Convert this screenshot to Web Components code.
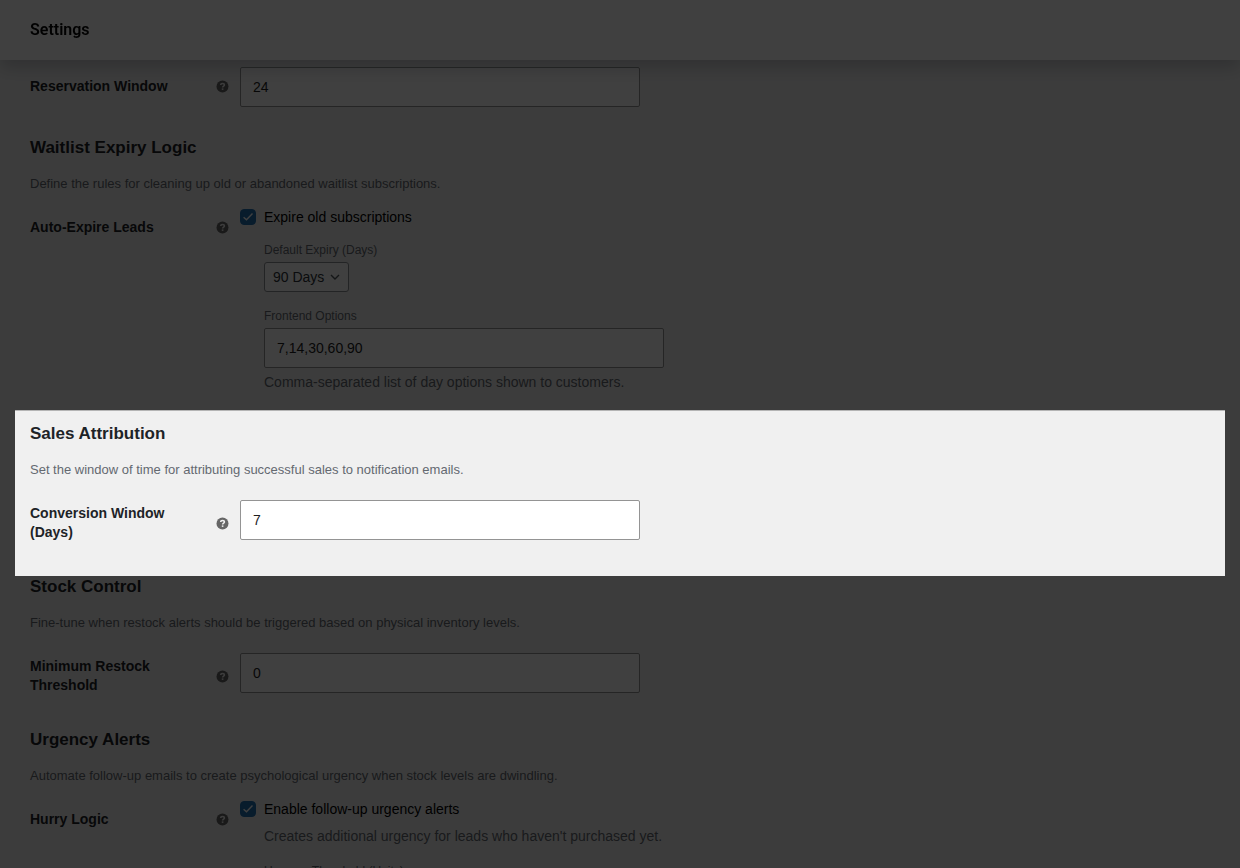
<!DOCTYPE html>
<html lang="en">
<head>
<meta charset="utf-8">
<title>Settings</title>
<style>
  html, body { height: 100%; }
  body {
    margin: 0;
    overflow: hidden;
    background: #f0f0f0;
    color: #1d2327;
    font: 14px/20px "Liberation Sans", Arial, sans-serif;
  }
</style>
</head>
<body>

<page-header>Settings</page-header>

<settings-page>
  <settings-row label="Reservation Window" value="24"></settings-row>

  <settings-section heading="Waitlist Expiry Logic">
    <span slot="description">Define the rules for cleaning up old or abandoned waitlist subscriptions.</span>
    <settings-row label="Auto-Expire Leads">
      <check-field checked>Expire old subscriptions</check-field>
      <sub-field type="select" label="Default Expiry (Days)" options="90 Days|60 Days|30 Days"></sub-field>
      <sub-field label="Frontend Options" value="7,14,30,60,90">Comma-separated list of day options shown to customers.</sub-field>
    </settings-row>
  </settings-section>

  <settings-section heading="Sales Attribution" spotlight>
    <span slot="description">Set the window of time for attributing successful sales to notification emails.</span>
    <settings-row label="Conversion Window (Days)" value="7" two-line></settings-row>
  </settings-section>

  <settings-section heading="Stock Control">
    <span slot="description">Fine-tune when restock alerts should be triggered based on physical inventory levels.</span>
    <settings-row label="Minimum Restock Threshold" value="0" two-line></settings-row>
  </settings-section>

  <settings-section heading="Urgency Alerts">
    <span slot="description">Automate follow-up emails to create psychological urgency when stock levels are dwindling.</span>
    <settings-row label="Hurry Logic">
      <check-field checked hint="Creates additional urgency for leads who haven't purchased yet.">Enable follow-up urgency alerts</check-field>
      <sub-field label="Urgency Threshold (Units)" value="5"></sub-field>
    </settings-row>
  </settings-section>
</settings-page>

<script>
// shared by every element that renders a text box
const inputStyles = `
  input {
    box-sizing: border-box;
    display: block;
    width: 100%;
    max-width: 400px;
    height: 40px;
    margin: 0;
    padding: 0 12px;
    border: 1px solid #949494;
    border-radius: 2px;
    background: #fff;
    color: #1e1e1e;
    font: inherit;
  }
`

class PageHeader extends HTMLElement {
  constructor() {
    super()
    this.attachShadow({ mode: 'open' })
    this.shadowRoot.innerHTML = `
      <style>
        :host {
          box-sizing: border-box;
          position: fixed;
          top: 0;
          left: 0;
          right: 0;
          z-index: 1;
          display: flex;
          align-items: center;
          height: 60px;
          padding: 0 30px;
          background: #fff;
          box-shadow: 0 8px 16px 0 rgba(85, 93, 102, 0.3);
        }
        h1 {
          margin: 0;
          font: 600 16px/20px Roboto, sans-serif;
          color: #070707;
        }
      </style>
      <h1><slot></slot></h1>
    `
  }
}

class SettingsPage extends HTMLElement {
  constructor() {
    super()
    this.attachShadow({ mode: 'open' })
    this.shadowRoot.innerHTML = `
      <style>
        :host { display: block; padding: 57px 30px 0; }
        main { display: flex; flex-direction: column; gap: 12px; }
      </style>
      <main><slot></slot></main>
    `
  }
}

/**
 * <settings-section>: heading, description and its rows.
 * With the spotlight attribute, everything outside the section is dimmed.
 */
class SettingsSection extends HTMLElement {
  constructor() {
    super()
    this.attachShadow({ mode: 'open' })
  }

  connectedCallback() {
    this.shadowRoot.innerHTML = `
      <style>
        :host { display: block; }
        :host([spotlight]) { position: relative; }
        :host([spotlight])::after {
          content: "";
          position: absolute;
          z-index: 10;
          inset: -11px -15px -14px;
          box-sizing: border-box;
          border-top: 1px solid rgba(0, 0, 0, 0.25);
          box-shadow: 0 0 0 9999px rgba(0, 0, 0, 0.75);
          pointer-events: none;
        }
        h2 { margin: 0 0 13px; font-size: 17px; line-height: 26px; }
        p { margin: 0 0 4px; font-size: 13px; line-height: 20px; color: #646970; }
      </style>
      <h2>${this.getAttribute('heading')}</h2>
      <p><slot name="description"></slot></p>
      <slot></slot>
    `
  }
}

class HelpTip extends HTMLElement {
  constructor() {
    super()
    this.attachShadow({ mode: 'open' })
    this.shadowRoot.innerHTML = `
      <style>
        :host { display: block; }
        button { display: block; padding: 0; border: 0; background: none; color: #666; }
        svg { display: block; }
      </style>
      <button type="button" aria-label="Help">
        <svg width="13" height="13" viewBox="0 0 13 13" fill="none">
          <circle cx="6.5" cy="6.5" r="6" fill="currentColor"/>
          <path d="M4.7 5.1C4.7 3.9 5.5 3.4 6.5 3.4S8.4 4 8.4 5C8.4 6.2 6.7 6.2 6.6 7.5" stroke="#f0f0f0" stroke-width="1.5"/>
          <path d="M5.8 8.4h1.6v1.5H5.8z" fill="#f0f0f0"/>
        </svg>
      </button>
    `
  }
}

/**
 * <settings-row>: label column, help tip and field.
 * With a value it renders its own text box, otherwise the slotted fields.
 */
class SettingsRow extends HTMLElement {
  constructor() {
    super()
    this.attachShadow({ mode: 'open' })
  }

  connectedCallback() {
    const label = this.getAttribute('label')
    const hasInput = this.hasAttribute('value')

    this.shadowRoot.innerHTML = `
      <style>
        :host {
          display: grid;
          grid-template-columns: 210px minmax(0, 1fr);
          align-items: start;
        }
        .head {
          display: flex;
          align-items: center;
          justify-content: space-between;
          padding: 20px 11px 20px 0;
        }
        .title { max-width: 150px; font-weight: 700; line-height: 19px; }
        .field { padding: 10px 0 16px; }
        :host([two-line]) .field { padding: 16px 0 10px; }
        ${inputStyles}
      </style>
      <div class="head">
        ${hasInput
          ? `<label class="title" for="field">${label}</label>`
          : `<span class="title">${label}</span>`}
        <help-tip></help-tip>
      </div>
      <div class="field">
        ${hasInput ? `<input id="field" type="text" value="${this.getAttribute('value')}">` : '<slot></slot>'}
      </div>
    `
  }
}

class CheckField extends HTMLElement {
  constructor() {
    super()
    this.attachShadow({ mode: 'open' })
  }

  connectedCallback() {
    const hint = this.getAttribute('hint')

    this.shadowRoot.innerHTML = `
      <style>
        :host { display: block; }
        label { display: flex; align-items: center; gap: 8px; line-height: 18px; color: #000; }
        .box { display: grid; }
        .box > * { grid-area: 1 / 1; }
        input {
          appearance: none;
          width: 16px;
          height: 16px;
          margin: 0;
          border: 1px solid #8c8f94;
          border-radius: 4px;
          background: #fff;
        }
        input:checked { border-color: #2271b1; background: #2271b1; }
        svg { pointer-events: none; }
        input:not(:checked) + svg { visibility: hidden; }
        p { margin: 8px 0 0 24px; line-height: 21px; color: #646970; }
      </style>
      <label>
        <span class="box">
          <input type="checkbox" ${this.hasAttribute('checked') ? 'checked' : ''}>
          <svg width="16" height="16" viewBox="0 0 16 16" fill="none">
            <path d="M3.6 8.2l2.9 2.6 6-6.2" stroke="#fff" stroke-width="1.4"/>
          </svg>
        </span>
        <slot></slot>
      </label>
      ${hint ? `<p>${hint}</p>` : ''}
    `
  }
}

/**
 * <sub-field>: small labelled field below a tick box.
 *   type: "text" (default) | "select"
 */
class SubField extends HTMLElement {
  constructor() {
    super()
    this.attachShadow({ mode: 'open' })
  }

  connectedCallback() {
    this.shadowRoot.innerHTML = `
      <style>
        :host { display: block; margin: 16px 0 0 24px; }
        label { display: block; margin-bottom: 4px; font-size: 12px; line-height: 16px; color: #646970; }
        ${inputStyles}
        .select { display: inline-grid; align-items: center; vertical-align: top; }
        .select > * { grid-area: 1 / 1; }
        select {
          appearance: none;
          box-sizing: border-box;
          height: 30px;
          margin: 0;
          padding: 0 23px 0 8px;
          border: 1px solid #8c8f94;
          border-radius: 3px;
          background: #fff;
          color: #2c3338;
          font: inherit;
        }
        svg { justify-self: end; margin-right: 9px; pointer-events: none; }
        p { margin: 4px 0 0; line-height: 21px; color: #646970; }
      </style>
      <label for="field">${this.getAttribute('label')}</label>
      ${this._control()}
      ${this.textContent.trim() ? '<p><slot></slot></p>' : ''}
    `
  }

  _control() {
    if (this.getAttribute('type') === 'select') {
      const options = this.getAttribute('options').split('|')
      return `
        <span class="select">
          <select id="field">${options.map((o) => `<option>${o}</option>`).join('')}</select>
          <svg width="10" height="6" viewBox="0 0 10 6" fill="none">
            <path d="M1 1l4 4 4-4" stroke="#50575e" stroke-width="1.4"/>
          </svg>
        </span>
      `
    }
    return `<input id="field" type="text" value="${this.getAttribute('value') || ''}">`
  }
}

customElements.define('page-header', PageHeader)
customElements.define('settings-page', SettingsPage)
customElements.define('settings-section', SettingsSection)
customElements.define('help-tip', HelpTip)
customElements.define('settings-row', SettingsRow)
customElements.define('check-field', CheckField)
customElements.define('sub-field', SubField)
</script>
</body>
</html>
